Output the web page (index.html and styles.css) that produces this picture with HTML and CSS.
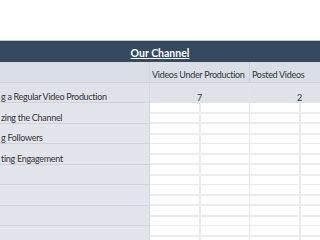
FILE: index.html
```html
<!DOCTYPE html>
<html lang="en">
<head>
    <meta charset="UTF-8">
    <meta name="viewport" content="width=device-width, initial-scale=1.0">
    <title>Our Channel</title>
    <link rel="stylesheet" href="styles.css">
</head>
<body>

<div class="top-space"></div>

<div class="banner"><span>Our Channel</span></div>

<div class="sheet">
    <!-- header row -->
    <div class="row head">
        <div class="label"></div>
        <div class="cell">Videos Under Production</div>
        <div class="cell">Posted Videos</div>
    </div>

    <!-- first goal, already has numbers -->
    <div class="row filled">
        <div class="label">g a Regular Video Production</div>
        <div class="cell num">7</div>
        <div class="cell num">2</div>
    </div>

    <div class="row">
        <div class="label">zing the Channel</div>
        <div class="cell empty"></div>
        <div class="cell empty"></div>
    </div>
    <div class="row">
        <div class="label">g Followers</div>
        <div class="cell empty"></div>
        <div class="cell empty"></div>
    </div>
    <div class="row">
        <div class="label">ting Engagement</div>
        <div class="cell empty"></div>
        <div class="cell empty"></div>
    </div>
    <div class="row">
        <div class="label"></div>
        <div class="cell empty"></div>
        <div class="cell empty"></div>
    </div>
    <div class="row">
        <div class="label"></div>
        <div class="cell empty"></div>
        <div class="cell empty"></div>
    </div>
    <div class="row">
        <div class="label"></div>
        <div class="cell empty"></div>
        <div class="cell empty"></div>
    </div>
    <div class="row">
        <div class="label"></div>
        <div class="cell empty"></div>
        <div class="cell empty"></div>
    </div>
</div>

</body>
</html>
```

FILE: styles.css
```css
body {
    margin: 0;
    background-color: #fff;
    font-family: Lato, "Open Sans", sans-serif;
    color: #333;
    overflow: hidden;
}
.top-space {
    height: 40px;
    border-bottom: 1px solid #c8c8c8;
}
.banner {
    height: 21px;
    background-color: #354a5f;
    color: #fff;
    font-size: 10.5px;
    font-weight: bold;
    text-align: center;
    line-height: 25px;
}
.banner span {
    text-decoration: underline;
}
.sheet {
    width: 320px;
    overflow: hidden;
}
.row {
    display: flex;
    height: 20.5px;
    font-size: 9px;
    letter-spacing: -0.3px;
}
.label {
    width: 150px;
    flex-shrink: 0;
    background-color: #e3e5ec;
    border-bottom: 1px solid #cfd2da;
    border-right: 1px solid #d5d7df;
    box-sizing: border-box;
    white-space: nowrap;
    overflow: hidden;
    padding-left: 1px;
    display: flex;
    align-items: flex-end;
    padding-bottom: 0;
}
.cell {
    width: 100px;
    flex-shrink: 0;
    box-sizing: border-box;
    border-right: 1px solid #e4e4ec;
    white-space: nowrap;
    display: flex;
    align-items: flex-end;
    padding-bottom: 0;
}
.head .label,
.head .cell {
    background-color: #d9dee7;
    border-bottom: 1px solid #cdd2db;
    padding-bottom: 2px;
}
.head .cell {
    border-right: 1px solid #c9ced8;
    padding-left: 2px;
}
.filled .label,
.filled .cell {
    background-color: #dfe2ea;
}
.num {
    justify-content: center;
}
/* spreadsheet grid behind the empty cells: split in half each way */
.empty {
    padding: 0;
    background-color: #fff;
    background-image:
        linear-gradient(#ececf2, #ececf2),
        linear-gradient(#ececf2, #ececf2),
        linear-gradient(#e9e9f0, #e9e9f0);
    background-size: 100% 2px, 100% 2px, 2px 100%;
    background-position: 0 9px, 0 19px, 49px 0;
    background-repeat: no-repeat;
}
```
